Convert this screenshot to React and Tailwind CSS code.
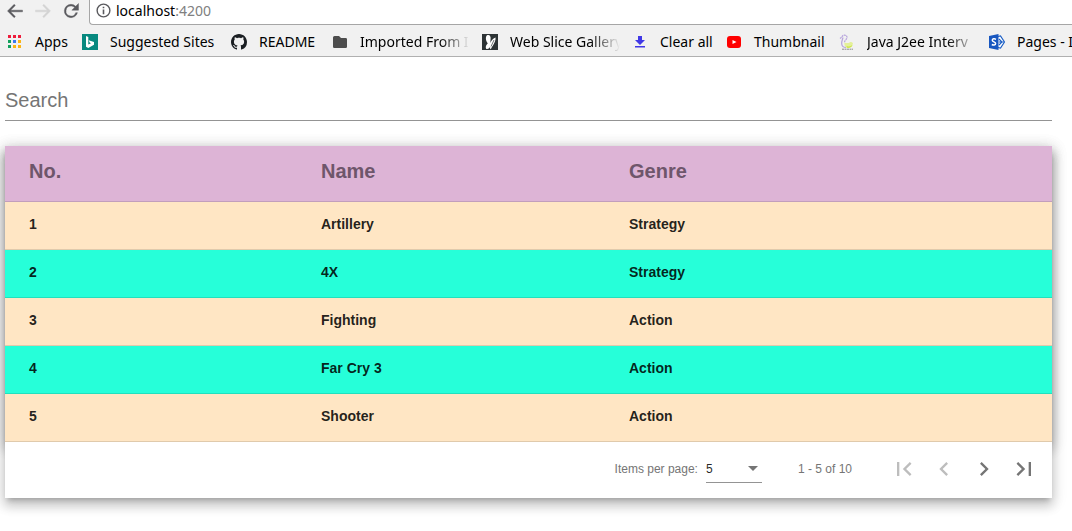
import { useState } from "react";

function AppsIcon() {
  const colors = ["#ee1c3b", "#ee1c3b", "#ee1c3b", "#12a05c", "#3b78f0", "#fbb414", "#12a05c", "#fbb414", "#fbb414"];
  return (
    <svg width="16" height="16" viewBox="0 0 16 16" aria-hidden="true">
      {colors.map((c, i) => (
        <rect key={i} x={1 + (i % 3) * 5} y={1 + Math.floor(i / 3) * 5} width="3" height="3" fill={c} />
      ))}
    </svg>
  );
}

function BingIcon() {
  return (
    <svg width="16" height="16" viewBox="0 0 16 16" aria-hidden="true">
      <rect width="16" height="16" fill="#07897f" />
      <path d="M4 2l2.300.9v7.700L9 9.200 7.600 8.500 6.700 6.300 12 8.100v2.600L6.300 14 4 12.700z" fill="#fff" />
    </svg>
  );
}

function GithubIcon() {
  return (
    <svg width="16" height="16" viewBox="0 0 16 16" fill="#1b1f23" aria-hidden="true">
      <path d="M8 0C3.580 0 0 3.580 0 8c0 3.540 2.290 6.530 5.470 7.590.4.070.55-.17.55-.38 0-.19-.01-.82-.01-1.490-2.010.37-2.530-.49-2.690-.94-.09-.23-.48-.94-.82-1.130-.28-.15-.68-.52-.01-.53.63-.01 1.080.58 1.230.82.72 1.210 1.870.87 2.330.66.07-.52.28-.87.51-1.070-1.780-.2-3.640-.89-3.640-3.950 0-.87.31-1.590.82-2.150-.08-.2-.36-1.020.08-2.120 0 0 .67-.21 2.200.82.64-.18 1.320-.27 2-.27s1.360.09 2 .27c1.530-1.040 2.200-.82 2.200-.82.44 1.100.16 1.920.08 2.120.51.56.82 1.270.82 2.150 0 3.070-1.870 3.750-3.650 3.950.29.25.54.73.54 1.480 0 1.070-.01 1.930-.01 2.200 0 .21.15.46.55.38A8.010 8.010 0 0016 8c0-4.420-3.580-8-8-8z" />
    </svg>
  );
}

function FolderIcon() {
  return (
    <svg width="16" height="16" viewBox="0 0 16 16" fill="#4d4d4d" aria-hidden="true">
      <path d="M2.500 2H7l2 2h4.700A1.300 1.300 0 0115 5.300v7.400a1.300 1.300 0 01-1.300 1.300H2.300A1.300 1.300 0 011 12.700V3.500A1.500 1.500 0 012.500 2z" />
    </svg>
  );
}

function ButterflyIcon() {
  return (
    <svg width="16" height="16" viewBox="0 0 16 16" aria-hidden="true">
      <rect width="16" height="16" fill="#2d3335" />
      <path d="M5 1.200C7.500.2 9 2 8.600 5L8.300 9c1.200-2.700 3-5 5.300-5.500.3 3-1.500 6.500-3.800 9.800l-1 1.900c-.8-.2-.8-1.400-.7-2.200-1 1.500-2.500 2.600-4 1.700-1-2 .3-4.200 1.700-5.500C4 7.500 3 3 5 1.200z" fill="#fff" />
      <path d="M9 12.500L12 6" stroke="#2d3335" strokeWidth=".7" />
    </svg>
  );
}

function DownloadIcon() {
  return (
    <svg width="16" height="16" viewBox="0 0 16 16" fill="#4038e6" aria-hidden="true">
      <path d="M6 2h4v4h3L8 11 3 6h3zM3 12h10v1.500H3z" />
    </svg>
  );
}

function YoutubeIcon() {
  return (
    <svg width="16" height="16" viewBox="0 0 16 16" aria-hidden="true">
      <rect x="1" y="2" width="14" height="12" rx="3" fill="#f00" />
      <path d="M6.500 6l4 2-4 2z" fill="#fff" />
    </svg>
  );
}

function JavaIcon() {
  return (
    <svg width="16" height="16" viewBox="0 0 16 16" fill="none" aria-hidden="true">
      <path d="M1 4.500l2-1.500C3.500.5 7.500.5 8 3c.3 2-2.500 3.500-2.500 5.500" stroke="#b7a4dc" strokeWidth="1.200" strokeDasharray="2 .6" />
      <path d="M4 3.500c-.4 1.700-1.600 4-1.300 6.500S5 13.500 7 13.500" stroke="#b7a4dc" strokeWidth="1.200" />
      <path d="M5.500 8.500c1.500.5 3.500 1 5 0 1.300-.8 2.500-.6 3.500.8-.4 3-2.500 4.700-5 4.700s-4-2.500-3.500-5.500z" fill="#e4f09a" />
      <path d="M7.500 12c2 .8 4 .5 6-1-.8 2.200-2.500 3-4.500 3-1 0-1.500-1-1.500-2z" fill="#cde84a" />
      <path d="M3 15.200h11" stroke="#8d8d8d" strokeWidth="1" strokeDasharray="2 .5" />
    </svg>
  );
}

function SharepointIcon() {
  return (
    <svg width="16" height="16" viewBox="0 0 16 16" fill="none" aria-hidden="true">
      <path d="M9 2.500l2.500-.5 4 6-4 6-2.500-.5" fill="#fff" stroke="#1c5fc5" strokeWidth="1.200" />
      <path d="M10 5l3 3-3 3M10 8h5" stroke="#1c5fc5" strokeWidth="1.100" />
      <path d="M0 2l9.500-2v16L0 14z" fill="#1857c0" />
      <path d="M7 5.300C5.500 4.500 3.300 4.600 3.300 6.200c0 1.900 3.300 1.500 3.300 3.400 0 1.700-2.300 1.700-3.800.9" stroke="#fff" strokeWidth="1.500" />
    </svg>
  );
}

const bookmarks = [
  { label: "Apps", Icon: AppsIcon, width: "w-[75px]" },
  { label: "Suggested Sites", Icon: BingIcon, width: "w-[149px]" },
  { label: "README", Icon: GithubIcon, width: "w-[101px]" },
  { label: "Imported From I", Icon: FolderIcon, width: "w-[150px]", fade: true },
  { label: "Web Slice Gallery", Icon: ButterflyIcon, width: "w-[150px]", fade: true },
  { label: "Clear all", Icon: DownloadIcon, width: "w-[94px]" },
  { label: "Thumbnail", Icon: YoutubeIcon, width: "w-[113px]" },
  { label: "Java J2ee Interv", Icon: JavaIcon, width: "w-[150px]", fade: true },
  { label: "Pages - I", Icon: SharepointIcon, width: "w-[150px]" },
];

const rows = [
  [1, "Artillery", "Strategy"],
  [2, "4X", "Strategy"],
  [3, "Fighting", "Action"],
  [4, "Far Cry 3", "Action"],
  [5, "Shooter", "Action"],
];

const elevation =
  "shadow-[0_5px_5px_-3px_rgba(0,0,0,0.2),0_8px_10px_1px_rgba(0,0,0,0.14),0_3px_14px_2px_rgba(0,0,0,0.12)]";

function NavButton({ label, path, disabled }) {
  return (
    <button type="button" aria-label={label} disabled={disabled} className="text-[#5a5a5e] disabled:text-[#d3d3d3]">
      <svg
        width="20"
        height="20"
        viewBox="0 0 24 24"
        fill="currentColor"
        stroke="currentColor"
        strokeWidth=".5"
        aria-hidden="true"
      >
        <path d={path} />
      </svg>
    </button>
  );
}

function BrowserBar() {
  return (
    <header className="overflow-hidden border-b border-[#b0b0b0] bg-[#f1f1f1] font-['Noto_Sans',sans-serif] text-sm text-black">
      <div className="flex h-[25px]">
        <div className="flex w-[89px] shrink-0 items-start gap-2 pt-px pl-[5px]">
          <NavButton label="Back" path="M21 11H6.800l5.600-5.600L11 4l-8 8 8 8 1.400-1.400L6.800 13H21z" />
          <NavButton label="Forward" disabled path="M3 11h14.200l-5.600-5.600L13 4l8 8-8 8-1.400-1.400 5.600-5.600H3z" />
          <NavButton
            label="Reload"
            path="M17.650 6.350A7.960 7.960 0 0012 4a8 8 0 107.730 10h-2.080A6 6 0 1112 6c1.660 0 3.140.69 4.220 1.780L13 11h8V3z"
          />
        </div>
        <div className="flex min-w-0 flex-1 items-start gap-[5px] rounded-bl-sm border-b border-l border-[#a6a6a6] bg-white pt-[3px] pl-[6px]">
          <svg width="15" height="15" viewBox="0 0 16 16" fill="none" stroke="#5a5a5e" strokeWidth="1.500" aria-hidden="true">
            <circle cx="8" cy="8" r="6.800" />
            <path d="M8 7v5M8 4v1.700" strokeWidth="1.700" />
          </svg>
          <span className="leading-4">
            localhost<span className="text-[#808080]">:4200</span>
          </span>
        </div>
      </div>
      <nav aria-label="Bookmarks" className="flex h-[31px] items-center pt-[3px] pl-[7px]">
        {bookmarks.map(({ label, Icon, width, fade }) => (
          <a key={label} href="#" className={`flex shrink-0 items-center gap-3 ${width}`}>
            <span className="shrink-0">
              <Icon />
            </span>
            <span
              className={`whitespace-nowrap ${
                fade ? "[mask-image:linear-gradient(to_right,black_80px,transparent_110px)]" : ""
              }`}
            >
              {label}
            </span>
          </a>
        ))}
      </nav>
    </header>
  );
}

function PageButton({ label, path, disabled }) {
  return (
    <button
      type="button"
      aria-label={label}
      disabled={disabled}
      className="flex size-10 items-center justify-center text-[#757575] disabled:text-[#bdbdbd]"
    >
      <svg width="28" height="28" viewBox="0 0 24 24" fill="currentColor" aria-hidden="true">
        <path d={path} />
      </svg>
    </button>
  );
}

export default function App() {
  const [query, setQuery] = useState("");
  const visible = rows.filter((row) => row.join(" ").toLowerCase().includes(query.toLowerCase()));
  return (
    <div className="bg-white">
      <BrowserBar />
      <main className="pt-7 pr-5 pb-8 pl-[5px] font-['Liberation_Sans',Arial,sans-serif]">
        <input
          type="text"
          aria-label="Search"
          placeholder="Search"
          value={query}
          onChange={(e) => setQuery(e.target.value)}
          className="block h-9 w-full border-b border-[#949494] pb-1 text-xl text-black/87 outline-none placeholder:text-[#757575]"
        />
        <section className={`mt-[25px] ${elevation}`}>
          <table className={`w-full table-fixed border-separate border-spacing-0 text-left ${elevation}`}>
            <colgroup>
              <col className="w-[292px]" />
              <col className="w-[308px]" />
              <col />
            </colgroup>
            <thead>
              <tr className="h-14 bg-[#ddb4d6] text-xl text-[#6e566b]">
                <th className="border-b border-black/12 pb-1.5 pl-6">No.</th>
                <th className="border-b border-black/12 pb-1.5 pl-6">Name</th>
                <th className="border-b border-black/12 pb-1.5 pl-6">Genre</th>
              </tr>
            </thead>
            <tbody>
              {visible.map((row) => (
                <tr key={row[0]} className="h-12 bg-[#ffe6c4] text-sm font-bold text-black/87 even:bg-[#26ffd9]">
                  {row.map((cell, i) => (
                    <td key={i} className="border-b border-black/12 pb-1 pl-6">
                      {cell}
                    </td>
                  ))}
                </tr>
              ))}
            </tbody>
          </table>
          <footer className="relative flex h-14 items-center justify-end bg-white pr-2 pb-0.5 text-xs text-[#757575]">
            <label htmlFor="page-size">Items per page:</label>
            <div className="mr-9 ml-2 flex h-7 w-14 items-center border-b border-[#949494]">
              <select id="page-size" defaultValue="5" className="min-w-0 flex-1 appearance-none text-black/87 outline-none">
                <option>5</option>
                <option>10</option>
                <option>20</option>
              </select>
              <svg width="18" height="5" viewBox="0 0 18 5" fill="#757575" aria-hidden="true">
                <path d="M4 0h10L9 5z" />
              </svg>
            </div>
            <span className="mr-8">1 - 5 of 10</span>
            <PageButton label="First page" disabled path="M18.410 16.590L13.820 12l4.590-4.590L17 6l-6 6 6 6zM6 6h2v12H6z" />
            <PageButton label="Previous page" disabled path="M15.410 7.410L14 6l-6 6 6 6 1.410-1.410L10.830 12z" />
            <PageButton label="Next page" path="M10 6L8.590 7.410 13.170 12l-4.580 4.590L10 18l6-6z" />
            <PageButton label="Last page" path="M5.590 7.410L10.180 12l-4.590 4.590L7 18l6-6-6-6zM16 6h2v12h-2z" />
          </footer>
        </section>
      </main>
    </div>
  );
}
